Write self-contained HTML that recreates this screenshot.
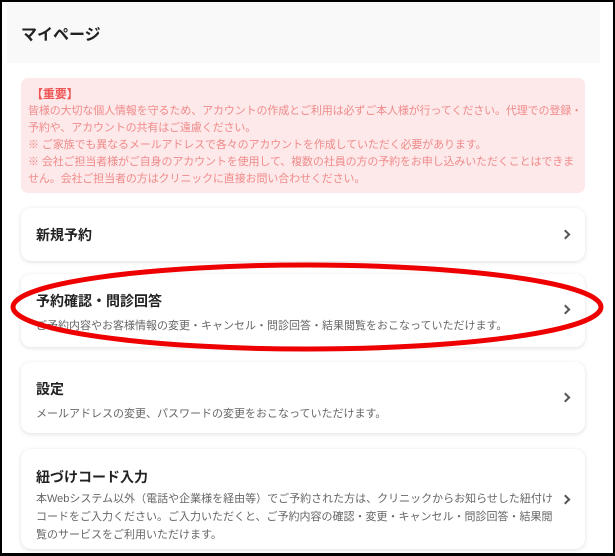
<!DOCTYPE html>
<html><head><meta charset="utf-8"><style>
*{margin:0;padding:0;box-sizing:border-box}
body{width:615px;height:556px;overflow:hidden;background:#fff;font-family:"Liberation Sans","Noto Sans CJK JP",sans-serif;position:relative}
.frame{position:absolute;left:0;top:0;width:615px;height:556px;border:2px solid #000;border-bottom-width:3px;pointer-events:none;z-index:5}
.hdr{position:absolute;left:7px;top:2px;width:593px;height:61px;background:#f9f9f9}
.hdr h1{position:absolute;left:14px;top:19px;font-size:16px;font-weight:bold;color:#222}
.pink{position:absolute;left:21px;top:78px;width:564px;height:115px;background:#fde9ea;border-radius:7px;padding:8px 0 0 7px;color:#f08a8a;font-size:11px;line-height:17px;letter-spacing:-0.12px}
.pink b{color:#f05555;font-size:12px;font-weight:bold;display:block;margin-left:3px;line-height:17px}
.card{position:absolute;left:21px;width:564px;background:#fff;border-radius:10px;box-shadow:0 1px 5px rgba(0,0,0,0.13);padding-left:15px}
.card h2{font-size:14px;font-weight:bold;color:#222}
.card p{font-size:11px;color:#666;line-height:18px;width:522px}
.arr{position:absolute;right:16px;width:7px;height:7px;border-right:2px solid #555;border-top:2px solid #555;transform:rotate(45deg)}
</style></head><body>
<div class="hdr"><h1>マイページ</h1></div>
<div class="pink"><b>【重要】</b>皆様の大切な個人情報を守るため、アカウントの作成とご利用は必ずご本人様が行ってください。代理での登録・予約や、アカウントの共有はご遠慮ください。<br>※ ご家族でも異なるメールアドレスで各々のアカウントを作成していただく必要があります。<br>※ 会社ご担当者様がご自身のアカウントを使用して、複数の社員の方の予約をお申し込みいただくことはできま<br>せん。会社ご担当者の方はクリニックに直接お問い合わせください。</div>
<div class="card" style="top:208px;height:53px"><h2 style="padding-top:17px">新規予約</h2><div class="arr" style="top:23px"></div></div>
<div class="card" style="top:274px;height:73px"><h2 style="padding-top:17px">予約確認・問診回答</h2><p style="margin-top:6px">ご予約内容やお客様情報の変更・キャンセル・問診回答・結果閲覧をおこなっていただけます。</p><div class="arr" style="top:32px"></div></div>
<div class="card" style="top:362px;height:71px"><h2 style="padding-top:17px">設定</h2><p style="margin-top:6px">メールアドレスの変更、パスワードの変更をおこなっていただけます。</p><div class="arr" style="top:32px"></div></div>
<div class="card" style="top:449px;height:100px"><h2 style="padding-top:18px">紐づけコード入力</h2><p style="margin-top:3px">本Webシステム以外（電話や企業様を経由等）でご予約された方は、クリニックからお知らせした紐付けコードをご入力ください。ご入力いただくと、ご予約内容の確認・変更・キャンセル・問診回答・結果閲覧のサービスをご利用いただけます。</p><div class="arr" style="top:47px"></div></div>
<svg style="position:absolute;left:0;top:0;z-index:4" width="615" height="556"><ellipse cx="307" cy="307" rx="294" ry="42" fill="none" stroke="#e00" stroke-width="5"/></svg>
<div class="frame"></div>
</body></html>
